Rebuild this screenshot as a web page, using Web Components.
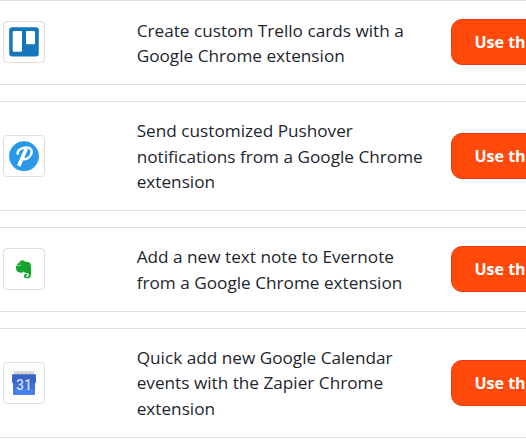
<!DOCTYPE html>
<html lang="en">
<head>
<meta charset="utf-8">
<title>Chrome extension templates</title>
<style>
    body {
        margin: 0;
        overflow: hidden;
        background: #fff;
        color: #1d262e;
        font-family: 'Open Sans', 'Noto Sans', sans-serif;
    }
</style>
</head>
<body>
<template-list>
    <template-card icon="trello">Create custom Trello cards with a Google Chrome extension</template-card>
    <template-card icon="pushover">Send customized Pushover notifications from a Google Chrome extension</template-card>
    <template-card icon="evernote">Add a new text note to Evernote from a Google Chrome extension</template-card>
    <template-card icon="calendar">Quick add new Google Calendar events with the Zapier Chrome extension</template-card>
</template-list>

<script>
const icons = {
    trello: `<svg viewBox="0 0 30 30">
        <rect x=".2" y=".3" width="29.6" height="29.2" rx="3" fill="#1576bd"/>
        <rect x="3.7" y="4" width="9.3" height="20.8" rx="1" fill="#fff"/>
        <rect x="17" y="4" width="9" height="13.2" rx="1" fill="#fff"/>
    </svg>`,
    pushover: `<svg viewBox="0 0 30 30">
        <circle cx="15" cy="15.2" r="14.9" fill="#2798ea"/>
        <path d="M9 13.8C7.4 10.4 11.4 6.8 16.7 6.4c5-.2 7.3 3.1 5.3 7.1-1.7 3.4-5.2 5.3-8.4 4.5" fill="none" stroke="#fff" stroke-width="2.4"/>
        <path d="M17.3 7.4 9.8 25" fill="none" stroke="#fff" stroke-width="3.8"/>
    </svg>`,
    evernote: `<svg viewBox="0 0 30 30">
        <path d="M12.3 6.5c1-.5 2.5-.4 3 .5.2.5 1.3.9 3.1 1 1.4 0 2.5.5 3.1 1.7.9 3.7.9 8.5.2 12.2-.4 1.8-1.5 2.4-3.5 2.4-2.3 0-3.3-.9-3.2-2.4.1-1.6 1.2-2.3 3.1-2v1.5c-1-.1-1.4.1-1.4.7 0 .6.5.8 1.4.8 1.1 0 1.7-.7 1.7-2.4-.2-1-.9-1.4-2.5-1.6-1.5-.1-2.3-.7-2.6-1.7-.6 1.4-1.5 1.8-2.9 1.5-3.1-.5-4.3-1.6-4.8-4.3-.3-1.7-.2-2.4.6-2.5h3.2c.8 0 1-.3 1-1V7.2z" fill="#15a52c"/>
        <path d="m7.2 11.4 4.6-4.8v4.8z" fill="#15a52c"/>
        <path d="M17.7 14.1c.3-1.3 1.9-1.2 2.2.3-.7-.3-1.4-.3-2.2-.3z" fill="#126c28"/>
    </svg>`,
    calendar: `<svg viewBox="0 0 30 30">
        <path d="M5 3.2h20V7H5z" fill="#cecdc9"/>
        <path d="M7 3.2v4M11 3.2v4M15 3.2v4M19 3.2v4M23 3.2v4" stroke="#e2e1dd" stroke-width="1.5"/>
        <path d="M3.2 6.6h23.6v7.4L26 15.3v10.5c0 .7-.4 1-1 1H5c-.7 0-1-.3-1-1V15.3L3.2 14z" fill="#416fd5"/>
        <path d="M3.2 6.6h23.6v7.4L26 15.3H4L3.2 14z" fill="#3963c6"/>
        <path d="M4 21h22v4.8c0 .7-.4 1-1 1H5c-.7 0-1-.3-1-1z" fill="#4780ee"/>
        <text x="15" y="22" text-anchor="middle" font-family="Roboto, sans-serif" font-size="14" font-weight="500" fill="#cfdcf8">31</text>
    </svg>`
};

class TemplateList extends HTMLElement {
    constructor() {
        super();
        this.attachShadow({ mode: 'open' });
        this.shadowRoot.innerHTML = `
        <style>
            :host {
                display: flex;
                flex-direction: column;
                gap: 16px;
                overflow: hidden;
            }
        </style>
        <slot></slot>
        `;
    }
}

class AppIcon extends HTMLElement {
    static get observedAttributes() {
        return ['name'];
    }

    constructor() {
        super();
        this.attachShadow({ mode: 'open' });
    }

    attributeChangedCallback() {
        this.render();
    }

    render() {
        this.shadowRoot.innerHTML = `
        <style>
            :host {
                display: flex;
                align-items: center;
                justify-content: center;
                width: 42px;
                height: 42px;
                box-sizing: border-box;
                border: 1px solid #dedede;
                border-radius: 4px;
                background: #fff;
            }
            svg {
                display: block;
                width: 30px;
                height: 30px;
            }
        </style>
        ${icons[this.getAttribute('name')] || ''}
        `;
    }
}

class ActionButton extends HTMLElement {
    constructor() {
        super();
        this.attachShadow({ mode: 'open' });
        this.shadowRoot.innerHTML = `
        <style>
            :host { display: block; }
            button {
                display: block;
                box-sizing: border-box;
                height: 46px;
                padding: 0 22px;
                border: 1px solid #e63a12;
                border-radius: 11px;
                background: #ff4a0b;
                color: #fff;
                font: 700 16px/24px 'Open Sans', 'Noto Sans', sans-serif;
                white-space: nowrap;
                cursor: pointer;
            }
        </style>
        <button type="button"><slot></slot></button>
        `;
    }
}

class TemplateCard extends HTMLElement {
    constructor() {
        super();
        this.attachShadow({ mode: 'open' });
    }

    connectedCallback() {
        this.shadowRoot.innerHTML = `
        <style>
            :host {
                display: grid;
                grid-template-columns: 133.7px 297px auto;
                align-items: center;
                justify-content: start;
                box-sizing: border-box;
                padding: 16.6px 0 15.8px 3px;
                border-top: 1px solid #dedede;
                border-bottom: 1px solid #dedede;
                background: #fff;
            }
            p {
                margin: 0;
                font-size: 17.2px;
                line-height: 25.2px;
            }
            app-icon { margin-top: -.8px; }
            action-button { margin: -.8px 0 0 17.8px; }
        </style>
        <app-icon name="${this.getAttribute('icon')}"></app-icon>
        <p><slot></slot></p>
        <action-button>Use this Zap</action-button>
        `;
    }
}

customElements.define('app-icon', AppIcon);
customElements.define('action-button', ActionButton);
customElements.define('template-card', TemplateCard);
customElements.define('template-list', TemplateList);
</script>
</body>
</html>
